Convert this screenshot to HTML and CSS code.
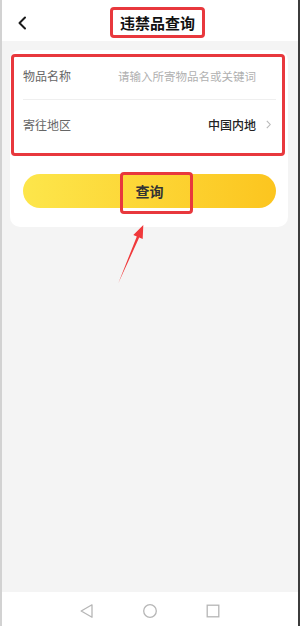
FILE: index.html
```html
<!DOCTYPE html>
<html lang="zh-CN">
<head>
<meta charset="utf-8">
<title>违禁品查询</title>
<link rel="stylesheet" href="styles.css">
</head>
<body>
<div class="frame">
  <header class="header">
    <div class="back">
      <svg width="10" height="14" viewBox="0 0 10 14"><polyline points="8,1.5 2.5,7 8,12.5" fill="none" stroke="#1a1a1a" stroke-width="2" stroke-linecap="round" stroke-linejoin="round"/></svg>
    </div>
    <h1 class="title">违禁品查询</h1>
    <div></div>
  </header>
  <main class="main">
    <section class="card">
      <div class="row row-first">
        <span class="label">物品名称</span>
        <span class="placeholder">请输入所寄物品名或关键词</span>
      </div>
      <div class="row">
        <span class="label">寄往地区</span>
        <span class="value">中国内地<svg class="chev" width="5" height="9" viewBox="0 0 5 9"><polyline points="0.8,0.8 4.2,4.5 0.8,8.2" fill="none" stroke="#b8b8b8" stroke-width="1.1"/></svg></span>
      </div>
      <div class="button">查询<span class="mark mark-btn"></span></div>
      <span class="mark mark-form"></span>
    </section>
    <svg class="arrow" width="40" height="70" viewBox="0 0 40 70"><polygon points="33.3,5 32.7,19 29.2,17.5 8.3,63.3 26.8,16.4 23.3,15" fill="#f0393b"/></svg>
  </main>
  <nav class="nav">
    <svg width="14" height="14" viewBox="0 0 14 14"><polygon points="12,0.8 1.2,7 12,13.2" fill="none" stroke="#b6b6b6" stroke-width="1.3" stroke-linejoin="round"/></svg>
    <svg width="14" height="14" viewBox="0 0 14 14"><circle cx="7" cy="7" r="6.3" fill="none" stroke="#b6b6b6" stroke-width="1.3"/></svg>
    <svg width="14" height="14" viewBox="0 0 14 14"><rect x="1.2" y="1.2" width="11.6" height="11.6" fill="none" stroke="#b6b6b6" stroke-width="1.3"/></svg>
  </nav>
</div>
</body>
</html>
```
FILE: styles.css
```css
* { box-sizing: border-box; }
html, body { margin: 0; padding: 0; }
body {
  width: 300px;
  height: 626px;
  font-family: "Noto Sans CJK SC", "Noto Sans", sans-serif;
  background: #f4f4f4;
  overflow: hidden;
}
.frame {
  height: 626px;
  display: flex;
  flex-direction: column;
  border-left: 2px solid #d2d2d2;
  border-right: 2px solid #3c3c3c;
  box-shadow: inset -1px 0 0 #cfcfcf;
}
.header {
  height: 41px;
  background: #fff;
  display: grid;
  grid-template-columns: 1fr auto 1fr;
  align-items: center;
  padding-left: 15px;
}
.back { display: flex; margin-top: 5px; }
.title {
  margin: 4px 0 0;
  font-size: 15px;
  line-height: 19px;
  font-weight: 700;
  color: #111;
  padding: 3px 7px;
  border: 3px solid #e8383d;
  border-radius: 4px;
}
.main {
  flex: 1;
  position: relative;
  background: #f4f4f4;
  padding: 9px 10px 0 8px;
}
.card {
  position: relative;
  background: #fff;
  border-radius: 10px;
  padding: 2px 12px 19px 13px;
}
.row {
  height: 48px;
  display: flex;
  align-items: center;
  justify-content: space-between;
  font-size: 12px;
}
.row-first { border-bottom: 1px solid #efefef; }
.label { color: #666; }
.placeholder { color: #b0b0b0; font-size: 11.5px; padding-right: 20px; }
.value { color: #222; font-weight: 500; display: flex; align-items: center; }
.chev { margin-left: 10px; margin-right: 5px; }
.button {
  position: relative;
  margin-top: 26px;
  height: 34px;
  border-radius: 17px;
  background: linear-gradient(to right, #fde64b, #fcc51f);
  display: flex;
  align-items: center;
  justify-content: center;
  font-size: 14px;
  font-weight: 600;
  color: #333;
}
.mark {
  position: absolute;
  border: 3px solid #e8383d;
  border-radius: 4px;
}
.mark-form { left: 1px; top: 4px; width: 274px; height: 102px; }
.mark-btn { left: 97px; top: -2px; width: 73px; height: 42px; }
.arrow { position: absolute; left: 108px; top: 179px; }
.nav {
  height: 34px;
  background: #fff;
  display: flex;
  align-items: center;
  justify-content: center;
  gap: 49px;
  padding-top: 4px;
}
```
